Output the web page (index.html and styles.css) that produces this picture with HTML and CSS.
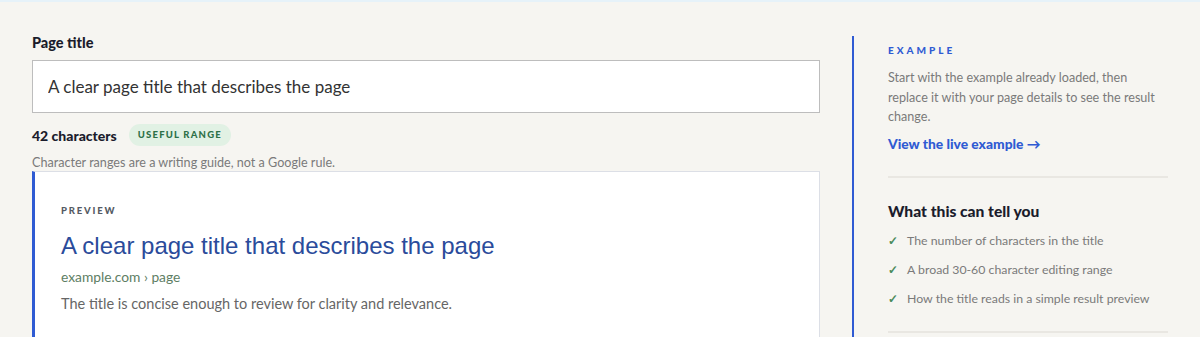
FILE: index.html
```html
<!DOCTYPE html>
<html lang="en">
<head>
  <meta charset="UTF-8">
  <title>Page title checker</title>
  <link rel="stylesheet" href="styles.css">
</head>
<body>
  <div class="page">
    <main class="main">
      <label class="field-label" for="title">Page title</label>
      <input class="field" id="title" type="text" value="A clear page title that describes the page">

      <div class="count-row">
        <span class="count">42 characters</span>
        <span class="badge">Useful range</span>
      </div>
      <p class="hint">Character ranges are a writing guide, not a Google rule.</p>

      <section class="preview">
        <div class="preview-label">Preview</div>
        <a class="result-title" href="#">A clear page title that describes the page</a>
        <div class="result-url">example.com › page</div>
        <p class="result-desc">The title is concise enough to review for clarity and relevance.</p>
      </section>
    </main>

    <aside class="side">
      <div class="eyebrow">Example</div>
      <p class="side-text">Start with the example already loaded, then replace it with your page details to see the result change.</p>
      <a class="side-link" href="#">View the live example →</a>

      <div class="side-block">
        <h3>What this can tell you</h3>
        <ul class="checks">
          <li>The number of characters in the title</li>
          <li>A broad 30-60 character editing range</li>
          <li>How the title reads in a simple result preview</li>
        </ul>
      </div>
    </aside>
  </div>
</body>
</html>
```

FILE: styles.css
```css
body {
  margin: 0;
  background: #f6f5f1;
  border-top: 2px solid #e6f2f9;
  font-family: Lato, "Open Sans", sans-serif;
  color: #1b1c2c;
}
.page {
  display: grid;
  grid-template-columns: 788px 316px;
  column-gap: 32px;
  padding: 32px 32px 0;
}
.main {
  display: flex;
  flex-direction: column;
}
.field-label {
  font-size: 14.5px;
  font-weight: 900;
  line-height: 18px;
  margin-bottom: 8px;
}
.field {
  height: 53px;
  box-sizing: border-box;
  border: 1px solid #bdbdbd;
  background: #fff;
  padding: 0 15px;
  font-family: Lato, sans-serif;
  font-size: 17px;
  color: #333;
  outline: none;
}
.count-row {
  display: flex;
  align-items: center;
  gap: 12px;
  margin-top: 11px;
}
.count {
  font-size: 14px;
  font-weight: 900;
}
.badge {
  background: #e1f1e4;
  color: #2e7048;
  border-radius: 11px;
  height: 22px;
  line-height: 22px;
  padding: 0 9px;
  font-size: 9.5px;
  font-weight: 900;
  letter-spacing: 1.2px;
  text-transform: uppercase;
}
.hint {
  margin: 8px 0 0;
  font-size: 12.6px;
  line-height: 17px;
  color: #7a7a7a;
}
.preview {
  background: #fff;
  border: 1px solid #dcdfe6;
  border-left: 3px solid #2f5bd3;
  padding: 32px 26px 30px;
  display: flex;
  flex-direction: column;
  align-items: flex-start;
}
.preview-label {
  font-size: 9.5px;
  font-weight: 900;
  letter-spacing: 1.8px;
  text-transform: uppercase;
  color: #555a63;
  line-height: 14px;
}
.result-title {
  margin-top: 13px;
  font-family: "Liberation Sans", Arial, sans-serif;
  font-size: 24px;
  line-height: 30px;
  color: #2a4b9b;
  text-decoration: none;
}
.result-url {
  margin-top: 6px;
  font-size: 13.8px;
  line-height: 20px;
  color: #5e7e64;
}
.result-desc {
  margin: 7px 0 0;
  font-size: 14.5px;
  line-height: 20px;
  color: #666;
}
.side {
  border-left: 2px solid #2f5bd3;
  margin-top: 2px;
  padding: 7px 0 0 34px;
}
.eyebrow {
  font-size: 10px;
  font-weight: 900;
  letter-spacing: 3px;
  text-transform: uppercase;
  color: #2f5bd3;
  line-height: 14px;
}
.side-text {
  margin: 11px 0 0;
  font-size: 12.6px;
  line-height: 19.5px;
  color: #7a7a7a;
}
.side-link {
  display: block;
  margin-top: 8px;
  font-size: 13.8px;
  font-weight: 900;
  line-height: 18px;
  color: #2f5bd3;
  text-decoration: none;
}
.side-block {
  margin-top: 23px;
  border-top: 2px solid #e9e7e2;
  border-bottom: 2px solid #e9e7e2;
  padding: 23px 0 18px;
}
.side-block h3 {
  margin: 0;
  font-size: 15.6px;
  font-weight: 900;
  line-height: 20px;
}
.checks {
  list-style: none;
  margin: 5px 0 0;
  padding: 0;
}
.checks li {
  font-size: 12.3px;
  line-height: 29px;
  color: #7a7a7a;
}
.checks li::before {
  content: "✓";
  color: #4b8b5c;
  font-weight: 700;
  margin-right: 9px;
}
```
